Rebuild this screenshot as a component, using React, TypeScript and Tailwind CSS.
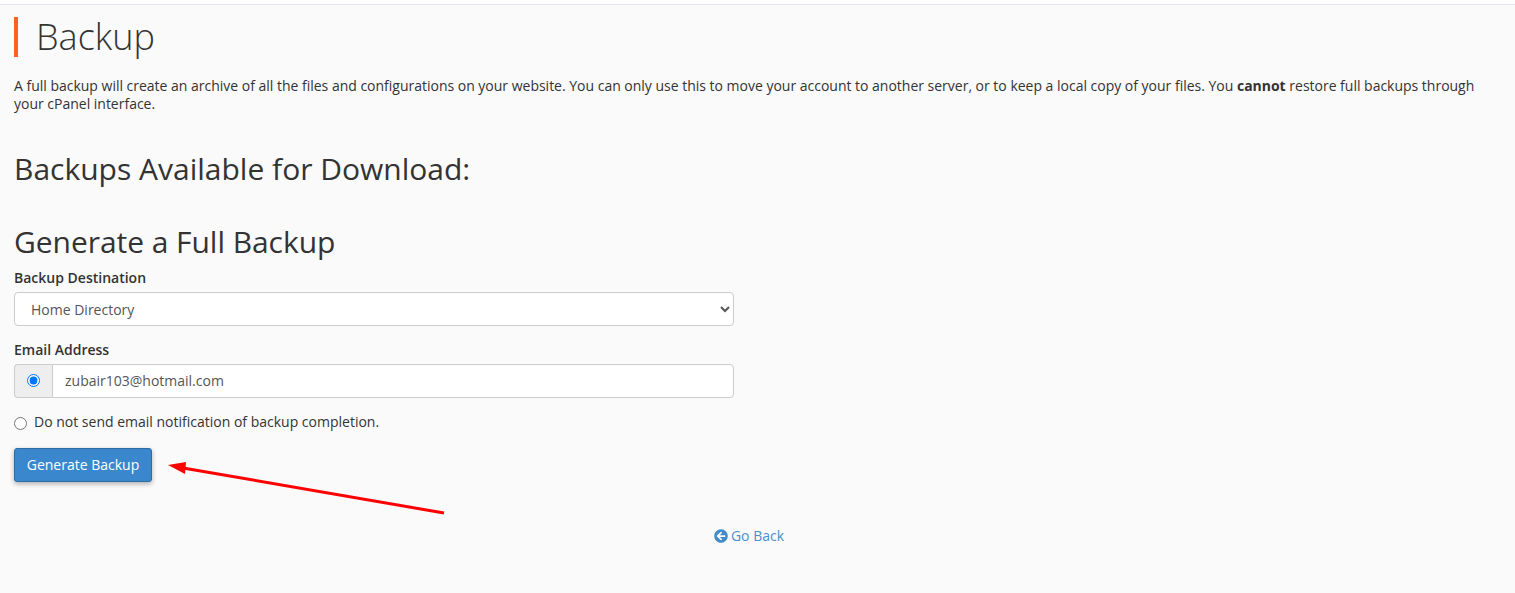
import { FaArrowCircleLeft } from "react-icons/fa"

export default function App() {
  return (
    <div className="relative h-[593px] overflow-hidden bg-[#fafafa] font-['Open_Sans',sans-serif] text-sm leading-[18px] text-[#333]">
      <div className="h-[5px] border-b border-[#e3e8ef] bg-white" />

      <div className="pl-[14px] pr-[30px]">
        {/* page title */}
        <div className="mt-3 flex h-10 items-center border-l-4 border-[#ff5f1f] pl-[18px]">
          <h1 className="text-[36px] leading-10 font-light text-[#333]">Backup</h1>
        </div>

        <p className="mt-5 tracking-[-0.01px]">
          A full backup will create an archive of all the files and configurations on your website. You can only use
          this to move your account to another server, or to keep a local copy of your files. You{" "}
          <strong className="font-bold">cannot</strong> restore full backups through your cPanel interface.
        </p>

        <h2 className="mt-9 text-[30px] leading-[40px] font-normal">Backups Available for Download:</h2>

        <h2 className="mt-[33px] text-[30px] leading-[40px] font-normal tracking-[-0.05px]">Generate a Full Backup</h2>

        <form className="w-[720px]" onSubmit={(e) => e.preventDefault()}>
          <label htmlFor="dest" className="mt-[7px] block font-semibold">
            Backup Destination
          </label>
          <select
            id="dest"
            defaultValue="homedir"
            className="mt-[5px] block h-[34px] w-full rounded border border-[#ccc] bg-white pl-3 pr-2 text-sm text-[#555]"
          >
            <option value="homedir">Home Directory</option>
          </select>

          <label htmlFor="email" className="mt-[15px] block font-semibold">
            Email Address
          </label>
          <div className="mt-[5px] flex h-[34px]">
            <span className="flex w-[38px] items-center justify-center rounded-l border border-r-0 border-[#ccc] bg-[#eee]">
              <input type="radio" name="notify" defaultChecked className="m-0 h-[13px] w-[13px] -translate-y-px" />
            </span>
            <input
              id="email"
              type="text"
              defaultValue="zubair103@hotmail.com"
              className="min-w-0 flex-1 rounded-r border border-[#ccc] bg-white px-3 text-sm text-[#555]"
            />
          </div>

          <label className="mt-[15px] flex h-[18px] items-center gap-[7px]">
            <input type="radio" name="notify" className="m-0 mt-[3px] h-[13px] w-[13px]" />
            <span>Do not send email notification of backup completion.</span>
          </label>

          <button
            type="submit"
            className="mt-[17px] block h-[34px] w-[138px] rounded-[3px] border border-[#2e6da4] bg-[#3a87cd] text-center text-sm text-white shadow-[0_2px_5px_rgba(0,0,0,0.3)]"
          >
            Generate Backup
          </button>
        </form>

        <div className="mt-[45px] flex items-center justify-center gap-[3px] pr-px text-[#4a8fd0]">
          <FaArrowCircleLeft className="h-[14px] w-[14px] text-[#428bca]" />
          <a href="#">Go Back</a>
        </div>
      </div>

      {/* annotation arrow */}
      <svg className="absolute left-[165px] top-[455px]" width="285" height="65" viewBox="0 0 285 65" fill="none">
        <line x1="279" y1="58" x2="18" y2="13" stroke="#ff0000" strokeWidth="3" />
        <polygon points="3,10 21,7 20,19" fill="#ff0000" />
      </svg>
    </div>
  )
}
